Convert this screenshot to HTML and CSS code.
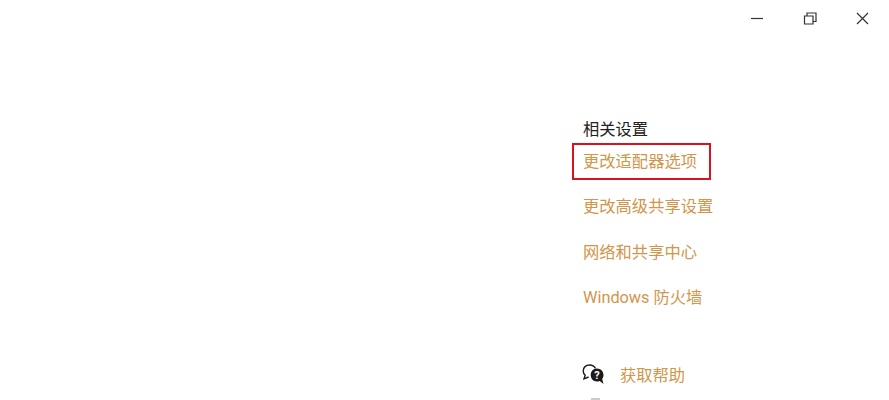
FILE: index.html
```html
<!DOCTYPE html>
<html lang="zh-CN">
<head>
    <meta charset="UTF-8">
    <title>相关设置</title>
    <link rel="stylesheet" href="styles.css">
</head>
<body>
    <div class="titlebar">
        <svg class="win-btn" width="14" height="14" viewBox="0 0 14 14"><path d="M0 7.5H12" /></svg>
        <svg class="win-btn" width="14" height="14" viewBox="0 0 14 14"><path d="M1.5 5H10V13H1.5ZM4 5V2H13V10.5H10" /></svg>
        <svg class="win-btn" width="14" height="14" viewBox="0 0 14 14"><path d="M2 2L13 13M13 2L2 13" /></svg>
    </div>
    <div class="side">
        <div class="side-title">相关设置</div>
        <a class="link link-marked">更改适配器选项</a>
        <a class="link">更改高级共享设置</a>
        <a class="link">网络和共享中心</a>
        <a class="link">Windows 防火墙</a>
        <div class="help">
            <svg width="22" height="24" viewBox="0 0 22 24">
                <path class="bubble-back" d="M13.5 4.5C12.5 2.4 10.2 1 7.5 1C4 1 1.2 3.4 1.2 6.9C1.2 8.8 2 10.2 3.2 11.2L2 14.8L6.6 13" />
                <path d="M15 4.5C11.4 4.5 8.7 7.3 8.7 11C8.7 14.7 11.4 17.5 15 17.5C16 17.5 16.9 17.3 17.7 16.9L21.5 20L20.2 15C21 13.9 21.5 12.5 21.5 11C21.5 7.3 18.6 4.5 15 4.5Z" />
                <text class="bubble-mark" x="15" y="15">?</text>
            </svg>
            <a class="link help-link">获取帮助</a>
        </div>
        <div class="next-icon"></div>
    </div>
</body>
</html>
```

FILE: styles.css
```css
body {
    margin: 0;
    height: 400px;
    overflow: hidden;
    background: #fff;
    font-family: "Roboto", "Noto Sans CJK SC", sans-serif;
    font-size: 16.3px;
}
.titlebar {
    display: flex;
    justify-content: flex-end;
    gap: 38px;
    padding: 11px 20px 0 0;
    height: 25px;
}
.win-btn path {
    fill: none;
    stroke: #333;
    stroke-width: 1.2;
}
.side {
    display: flex;
    flex-direction: column;
    align-items: flex-start;
    margin: 82px 0 0 583px;
}
.side-title {
    height: 24px;
    line-height: 24px;
    color: #222;
}
.link {
    height: 24px;
    line-height: 24px;
    margin-bottom: 21.3px;
    color: #d2954a;
}
.link-marked {
    position: relative;
    margin-top: 8px;
}
.link-marked::after {
    content: "";
    position: absolute;
    left: -11px;
    top: -7px;
    width: 135px;
    height: 33px;
    border: 2px solid #d9121f;
}
.help {
    display: flex;
    align-items: center;
    gap: 16px;
    margin-top: 33px;
    margin-left: -1px;
}
.help svg {
    fill: #1a1a1a;
}
.help .bubble-back {
    fill: none;
    stroke: #1a1a1a;
    stroke-width: 1.4;
}
.bubble-mark {
    fill: #fff;
    font-size: 11px;
    font-weight: bold;
    text-anchor: middle;
}
.help-link {
    margin-bottom: 0;
}
.next-icon {
    width: 9px;
    height: 2px;
    margin: 10px 0 0 8px;
    background: #ccc;
}
```
